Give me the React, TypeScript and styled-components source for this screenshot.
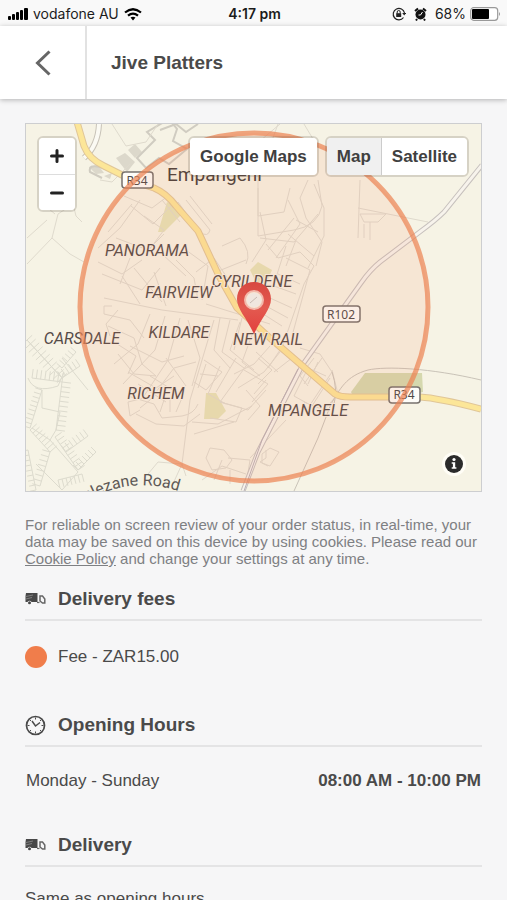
import React from "react";
import styled, { createGlobalStyle } from "styled-components";

const GlobalStyle = createGlobalStyle`
  * { box-sizing: border-box; }
  body {
    margin: 0;
    background: #f6f6f7;
    color: #4a4a4a;
    font-family: "Liberation Sans", Arial, sans-serif;
  }
  button { font: inherit; color: inherit; border: 0; padding: 0; cursor: pointer; }
`;

const Screen = styled.div`
  display: flex;
  flex-direction: column;
  height: 100vh;
  overflow: hidden;
`;

const StatusBar = styled.div`
  display: grid;
  grid-template-columns: 1fr auto 1fr;
  align-items: center;
  flex: none;
  height: 26px;
  padding: 2px 6px 0 8px;
  background: #f9f9f9;
  color: #1c1c1c;
  font: 14px/20px Inter, sans-serif;
`;

const StatusGroup = styled.div<{ $end?: boolean }>`
  display: flex;
  align-items: center;
  justify-content: ${(p) => (p.$end ? "flex-end" : "flex-start")};
  gap: ${(p) => (p.$end ? 8 : 5)}px;
`;

const Power = styled.span`
  display: flex;
  align-items: center;
  gap: 4px;
`;

const Clock = styled.span`
  font-weight: 600;
`;

const Header = styled.header`
  position: relative;
  display: flex;
  align-items: stretch;
  flex: none;
  height: 73px;
  background: #fff;
  box-shadow: 0 1px 5px rgba(0, 0, 0, 0.28);
`;

const BackButton = styled.button`
  display: flex;
  align-items: center;
  justify-content: center;
  width: 87px;
  background: none;
  border-right: 2px solid #e2e2e2;
`;

const Title = styled.h1`
  margin: 0;
  padding: 0 24px;
  align-self: center;
  font-size: 19px;
  line-height: 24px;
`;

const Content = styled.main`
  flex: 1;
  min-height: 0;
  padding: 24px 25px;
  overflow-y: auto;
  scrollbar-width: none;
`;

const MapPanel = styled.section`
  position: relative;
  height: 369px;
  border: 1px solid #cdced0;
  overflow: hidden;
  background: #f6f3e5;
`;

const MapDrawing = styled.svg`
  display: block;
  width: 100%;
  height: 100%;
`;

const MapControls = styled.div`
  position: absolute;
  inset: 12px 12px auto 11px;
  display: flex;
  align-items: flex-start;
  justify-content: space-between;
`;

const ControlGroup = styled.div<{ $vertical?: boolean }>`
  display: flex;
  flex-direction: ${(p) => (p.$vertical ? "column" : "row")};
  border: 2px solid rgba(90, 80, 70, 0.2);
  border-radius: 6px;
  background-clip: padding-box;
  overflow: hidden;
`;

const Layers = styled.div`
  display: flex;
  gap: 6px;
`;

const MapButton = styled.button<{ $active?: boolean; $divided?: boolean }>`
  height: 37px;
  padding: 0 10px;
  background: ${(p) => (p.$active ? "#f0f0f0" : "#fff")};
  border-left: ${(p) => (p.$divided ? "1px solid #ccc" : "0")};
  color: #404040;
  font-size: 17px;
  font-weight: bold;
  line-height: 20px;
`;

const ZoomButton = styled.button`
  display: flex;
  align-items: center;
  justify-content: center;
  width: 36px;
  height: 36px;
  background: #fff;

  & + & {
    border-top: 1px solid #ddd;
  }
`;

const InfoButton = styled.button`
  position: absolute;
  right: 15px;
  bottom: 15px;
  display: flex;
  align-items: center;
  justify-content: center;
  width: 24px;
  height: 24px;
  border-radius: 50%;
  background: #fffdf6;
`;

const Notice = styled.p`
  margin: 24px 0 12px;
  color: #7e8083;
  font-size: 15px;
  line-height: 17px;

  a { color: inherit; }
`;

const Section = styled.section`
  margin-bottom: 12px;
`;

const SectionHead = styled.div`
  display: flex;
  align-items: center;
  gap: 12px;
  height: 42px;
  border-bottom: 2px solid #e4e4e5;
`;

const SectionTitle = styled.h2`
  margin: 0;
  font-size: 19px;
  line-height: 24px;
`;

const FeeRow = styled.div`
  display: flex;
  align-items: center;
  gap: 11px;
  padding: 25px 0;
  font-size: 17px;
  line-height: 22px;
`;

const FeeDot = styled.span`
  width: 22px;
  height: 22px;
  border-radius: 50%;
  background: #f07d4b;
`;

const HoursRow = styled.div`
  display: flex;
  justify-content: space-between;
  padding: 24px 1px 22px;
  font-size: 17px;
  line-height: 20px;
`;

const SameHours = styled.p`
  margin: 0;
  padding: 22px 0;
  font-size: 17px;
  line-height: 20px;
`;

const TruckIcon = () => (
  <svg width="21" height="14" viewBox="0 0 21 14" aria-hidden="true">
    <path d="M1 1h11.500v9H6.500a2.200 2.200 0 0 0-4 0H.5V4z" fill="#484848" />
    <path d="M1 4.500l7-1.500M1 7l6-1.500" stroke="#999" strokeWidth=".7" />
    <circle cx="4.500" cy="10.800" r="1.500" fill="#484848" />
    <path d="M15 4h2.500l2.300 3v4h-2.300L15 9z" fill="none" stroke="#666" strokeWidth="1.500" />
    <path d="M12 10.500h2.500" stroke="#666" strokeWidth="1.200" />
  </svg>
);

const ClockIcon = () => (
  <svg width="21" height="21" viewBox="0 0 21 21" fill="none" stroke="#4a4a4a" aria-hidden="true">
    <circle cx="10.500" cy="10.500" r="9" strokeWidth="1.700" />
    <path d="M7 6l3.500 5L15 7.500" strokeWidth="1.500" />
    <path d="M10.500 2.500v2M10.500 16.500v2M2.500 10.500h2M16.500 10.500h2M5 16l1-1M16 16l-1-1M5 5l1 1M16 5l-1 1" strokeWidth="1" />
  </svg>
);

const InfoSection = ({ icon, title, children }: { icon: React.ReactNode; title: string; children: React.ReactNode }) => (
  <Section>
    <SectionHead>
      {icon}
      <SectionTitle>{title}</SectionTitle>
    </SectionHead>
    {children}
  </Section>
);

/* A street with short side lanes at regular steps. */
const comb = (x1: number, y1: number, x2: number, y2: number, n: number, len: number) => {
  const dx = x2 - x1;
  const dy = y2 - y1;
  const l = Math.hypot(dx, dy);
  let d = `M${x1} ${y1}L${x2} ${y2}`;
  for (let i = 0; i <= n; i++) {
    const x = x1 + (dx * i) / n;
    const y = y1 + (dy * i) / n;
    d += `M${x} ${y}l${(-dy / l) * len} ${(dx / l) * len}`;
  }
  return d;
};

const villageLanes = [
  comb(27, 340, 62, 378, 10, 7),
  comb(62, 378, 27, 340, 10, 7),
  comb(32, 378, 62, 382, 7, -9),
  comb(62, 382, 56, 430, 10, -9),
  comb(42, 390, 30, 428, 9, 7),
  comb(62, 378, 80, 366, 5, -8),
  comb(62, 368, 76, 352, 5, -7),
  comb(30, 430, 50, 452, 7, -9),
  comb(50, 452, 40, 486, 7, 8),
  comb(55, 437, 78, 470, 9, -8),
  comb(78, 470, 96, 452, 6, -7),
  comb(66, 452, 88, 436, 6, -8),
  comb(58, 480, 82, 474, 6, 8),
  comb(28, 450, 36, 490, 8, 6),
  "M62 358L88 390M28 378Q34 394 58 386L64 372M42 390V408L60 412L56 430L50 440L78 472L62 490M32 428L50 440M36 464L62 490",
].join("");

const townStreets = `
M27 264L52 238L58 214L73 204L76 216L82 222M27 238l20-18M55 214l-12-10M52 238l18 16l14 8
M112 124l14 22l20-4l12-18M130 164l-18 18l-12-2M140 200l-20 28l-22 20M124 196l28 12l16-12M131 206l22 18l20-20
M108 232l24-28M116 238l32 12l16-16M144 216l20 14l-18 24M162 200l18 22M178 202l22 30q8 6 10-2l-24-30M190 196l22 28
M98 262l24 12l20-14M102 274l40 16l18-22M120 284l10-26M104 298l58 12l76 10M118 310l-12 14l4 12M112 306h-8v8l26 6l14 18
M150 314l-12 30l-24 20M165 316l-10 34l-32 34M180 318l-12 42l-24 36M188 320l12 38l-8 28M108 326l26 12l8 26l14 12
M114 342l22 14l-8 18M118 354l16 20l22 2M130 346l32 16l22-6M196 362l-22 6l-24 32l-10 8M128 372l28 16l18-12
M176 260l18 18l4 22M186 250l22 16l-6 34M196 272l18-14l16 24M162 254l24 22M154 272l12 34M134 268l28 34M122 276l18 28
M216 272l30-12M222 246l18-8q12 14 6 26M206 304l64 20M214 320l-24 80l-8 64l-10 22M220 318l-6 32l16 18M230 320l-8 32l22 16
M240 322l-10 28l24 20M204 360l18 12l-16 18l-12-8M206 364l-8 24M220 366l-12 28l18 10M236 358l-20 34M246 366l-26 36l28 8l18-20
M220 402l22 6l-6 14l-26-4M194 434l40-12M192 422l26 2l34-18M128 396l26 8l8 14l20-2q12-2 16-12M136 414l20 10l28 2l16-12
M140 410l-10 6l-2-14l16-4M160 412l4-12M170 412v-14M176 412l6-14M200 374l18 2M138 384l28 18M150 376l26 16M166 358l20 28
M258 178v38l26-4l6-24M258 188v48l36-6q24-4 28-24l-4-26M260 238l34 4l24-28M268 250l26-32M276 258l24-34l-12-24
M308 180l-8 18l6 20l16 24l-6 24M314 184l10 24v28l-16 32M296 220l22 12M288 234l26 22M258 178l-4-32l26-22M278 124l-8 22
M304 124l12 20M360 180l-2 58M358 208l70 14M360 214h26l-8 8h-14zM364 224v14M370 222v18M286 258l24 12l-18 66M278 274l22 10
M274 286l22 8M270 298l22 10M266 306l22 12M260 312l22 14M266 244l12 14l22-6l14 14l-10 18l-22 64M286 246l-12 38M296 240l-10 26
M252 262l14-22l-6-28M242 318l-8 32M256 324l-14 38l18 14M270 346l-16 18l-20 10M280 352l-16 20l-26 16M244 370l24 14l-16 18
M256 352l22 20M266 332l14 18l-12 18M284 348l8 10l-18 14M258 384l14-14l-14-12M246 390l14 16l-12 14M266 380l-12 14
M300 348l20 6l12 18l-24 36M314 358l-14 18l8 10M322 358l-18 26M326 376l-18-8l-14 28l18 10l18-28M332 370l6 24l-14 16l-20-8M318 362l-10 22
M286 420l-36 38M206 458l4-10l14 2l8 10l-6 8l-14 2zM228 458l22 2l-4 26M222 460l-8 20M148 474l10-12l24 2l4 12M202 480l20-14l24 8M230 470v14
M262 454l8-6l9 4l-9 14l-8-3zM266 450v8l-6 4l8 4`;

const TerritoryMap = () => (
  <MapDrawing viewBox="26 124 455 367" preserveAspectRatio="xMidYMid slice" role="img" aria-label="Delivery area around Empangeni">
    <rect x="-400" y="-400" width="1600" height="1600" fill="#f6f3e5" />
    <path d="M167 202L178 208L182 214L164 232H158z M250 270l8-8l14 8l-6 14l-10-2z M206 393h10l10 18l-8 8h-14z" fill="#e6e3b8" />
    <path d="M351 392L365 373H422L423 392L408 396L352 394z" fill="#d5d8ae" />
    <path d="M116 158l9-5l10 9l-8 10zM128 150l7-6l7 8l-7 6zM89 167l9-2l6 8l-8 1zM104 176l8-3l-2 6z" fill="#dcd8cb" />
    <path d="M137 158l18-18l-8-8l22-13l8 10l-4 12l14 8l-18 15l-10-6l-13 10z M160 130l16-6l10 8l12-8M102 178l-12-6q-2-8 10-5l14 5" fill="none" stroke="#d0ccc1" strokeWidth="2" />
    <path d={townStreets} fill="none" stroke="#dfdacd" strokeWidth="1" />
    <path d={villageLanes} fill="none" stroke="#dddbce" strokeWidth="1" />
    <path d="M481 380C430 368 386 366 368 370C346 376 340 389 331 404L318 438L294 491M332 372q6 18 2 32" fill="none" stroke="#c9c3b8" strokeWidth="1" />
    <path d="M84 158Q98 146 99 124" fill="none" stroke="#c8c3b8" strokeWidth="6" />
    <path d="M84 158Q98 146 99 124" fill="none" stroke="#fbfaf3" strokeWidth="4" />
    <path d="M482 165L444 212Q436 220 421 231L380 262Q370 270 361 283L303 364L258 452L243 491" fill="none" stroke="#c6c0bd" strokeWidth="5" />
    <path d="M482 165L444 212Q436 220 421 231L380 262Q370 270 361 283L303 364L258 452L243 491" fill="none" stroke="#f7f3ec" strokeWidth="3" />
    <path d="M298 369L262 440L244 491" fill="none" stroke="#b9b0b6" strokeWidth="1" />
    <g fill="none" strokeLinejoin="round">
      <path d="M77 122L84 146Q89 159 104 166L138 183L154 188Q166 193 176 206L198 231L219 276L237 308L270 338L335 394Q340 397 350 397H420Q438 398 481 409" stroke="#e0c698" strokeWidth="7" />
      <path d="M77 122L84 146Q89 159 104 166L138 183L154 188Q166 193 176 206L198 231L219 276L237 308L270 338L335 394Q340 397 350 397H420Q438 398 481 409" stroke="#fce698" strokeWidth="5" />
    </g>
    <g fill="#fdfcf8" stroke="#77716d" strokeWidth="1.500">
      <rect x="122" y="172" width="31" height="16" rx="3" />
      <rect x="323" y="306" width="37" height="16" rx="3" />
      <rect x="389" y="387" width="31" height="16" rx="3" />
    </g>
    <g fontFamily="Noto Sans, sans-serif" fontSize="12" fill="#4d4848" textAnchor="middle">
      <text x="137" y="185">R34</text>
      <text x="341" y="319">R102</text>
      <text x="404" y="399">R34</text>
    </g>
    <text x="167" y="181" fontFamily="Roboto, sans-serif" fontSize="19" fill="#453e3b">Empangeni</text>
    <g fontFamily="Roboto, sans-serif" fontStyle="italic" fontSize="16" fill="#544b48" textAnchor="middle" stroke="#f8f1e4" strokeWidth="2" paintOrder="stroke">
      <text x="147" y="256">PANORAMA</text>
      <text x="252" y="287">CYRILDENE</text>
      <text x="179" y="298">FAIRVIEW</text>
      <text x="179" y="338">KILDARE</text>
      <text x="82" y="344">CARSDALE</text>
      <text x="268" y="345">NEW RAIL</text>
      <text x="156" y="399">RICHEM</text>
      <text x="308" y="416">MPANGELE</text>
    </g>
    <path id="road-label" d="M58 522Q124 462 200 500" fill="none" />
    <text fontFamily="Roboto, sans-serif" fontSize="16" fill="#5d5855">
      <textPath href="#road-label" startOffset="3">Ngwelezane Road</textPath>
    </text>
    <circle cx="254" cy="307" r="174" fill="#f5804f" fillOpacity=".11" stroke="#ed8251" strokeOpacity=".7" strokeWidth="5" />
    <defs>
      <linearGradient id="pin" x1="0" y1="0" x2="0" y2="1">
        <stop offset="0" stopColor="#d84840" />
        <stop offset=".5" stopColor="#e35a50" />
        <stop offset="1" stopColor="#e2403d" />
      </linearGradient>
    </defs>
    <path fillRule="evenodd" d="M254 282C244 282 237 289 237 299C237 309 246 317 254 334C262 317 271 309 271 299C271 289 264 282 254 282ZM254 291A9 9 0 1 1 254 309A9 9 0 1 1 254 291Z" fill="url(#pin)" />
    <circle cx="254" cy="300" r="9" fill="none" stroke="#f3b8ab" strokeWidth="2" />
    <circle cx="254" cy="300" r="7" fill="#f0e6df" />
    <path d="M250 303l7-6" stroke="#c7b9b2" strokeWidth="1" />
  </MapDrawing>
);

export default function App() {
  return (
    <Screen>
      <GlobalStyle />
      <StatusBar>
        <StatusGroup>
          <svg width="20" height="12" viewBox="0 0 20 12" fill="#000" aria-label="Signal">
            <rect x="0" y="8" width="3" height="4" rx="1" />
            <rect x="4" y="6" width="3" height="6" rx="1" />
            <rect x="8" y="4" width="3" height="8" rx="1" />
            <rect x="12" y="2" width="3" height="10" rx="1" />
            <rect x="16" y="0" width="4" height="12" rx="1" />
          </svg>
          <span>vodafone AU</span>
          <svg width="18" height="13" viewBox="0 0 18 13" fill="none" stroke="#000" strokeWidth="2.200" aria-label="Wi-Fi">
            <path d="M1 4.500Q9-2 17 4.500" />
            <path d="M4 7.700Q9 3.500 14 7.700" />
            <path d="M6.500 9.500Q9 7.800 11.500 9.500L9 12.500z" fill="#000" stroke="none" />
          </svg>
        </StatusGroup>
        <Clock>4:17 pm</Clock>
        <StatusGroup $end>
          <svg width="14" height="14" viewBox="0 0 14 14" fill="none" stroke="#222" aria-label="Rotation lock">
            <path d="M11.500 10.500A5.700 5.700 0 1 1 12.500 6" strokeWidth="1.200" />
            <path d="M10.200 6h4l-2 2.600z" fill="#222" stroke="none" />
            <rect x="4.200" y="6.200" width="5" height="3.800" fill="#222" stroke="none" />
            <path d="M5.200 6.500V5a1.500 1.500 0 0 1 3 0v1.500" />
          </svg>
          <svg width="13" height="14" viewBox="0 0 13 14" aria-label="Alarm">
            <circle cx="6.500" cy="7.500" r="5" fill="#111" />
            <path d="M1 4l3-2.500M12 4L9 1.500M3 12l-1 1.500M10 12l1 1.500" stroke="#111" strokeWidth="2" />
            <path d="M8.500 5L6.500 8H4.500" fill="none" stroke="#fff" strokeWidth="1" />
          </svg>
          <Power>
            <span>68%</span>
            <svg width="31" height="14" viewBox="0 0 31 14" aria-label="Battery">
              <rect x=".7" y=".7" width="27" height="12.600" rx="3" fill="#fff" stroke="#999" strokeWidth="1.200" />
              <rect x="2" y="2" width="17" height="10" rx="1" fill="#000" />
              <path d="M29 5q2 2 0 4z" fill="#999" />
            </svg>
          </Power>
        </StatusGroup>
      </StatusBar>
      <Header>
        <BackButton type="button" aria-label="Back">
          <svg width="16" height="26" viewBox="0 0 16 26" fill="none" stroke="#666" strokeWidth="3">
            <path d="M14.500 1.500L2.500 13L14.500 24.500" />
          </svg>
        </BackButton>
        <Title>Jive Platters</Title>
      </Header>
      <Content>
        <MapPanel>
          <TerritoryMap />
          <MapControls>
            <ControlGroup $vertical>
              <ZoomButton type="button" aria-label="Zoom in">
                <svg width="14" height="14" viewBox="0 0 14 14" stroke="#222" strokeWidth="3" strokeLinecap="round">
                  <path d="M7 1.500v11M1.500 7h11" />
                </svg>
              </ZoomButton>
              <ZoomButton type="button" aria-label="Zoom out">
                <svg width="14" height="14" viewBox="0 0 14 14" stroke="#222" strokeWidth="3" strokeLinecap="round">
                  <path d="M1.500 7h11" />
                </svg>
              </ZoomButton>
            </ControlGroup>
            <Layers>
              <ControlGroup>
                <MapButton type="button">Google Maps</MapButton>
              </ControlGroup>
              <ControlGroup>
                <MapButton type="button" $active aria-pressed="true">Map</MapButton>
                <MapButton type="button" $divided aria-pressed="false">Satellite</MapButton>
              </ControlGroup>
            </Layers>
          </MapControls>
          <InfoButton type="button" aria-label="Map information">
            <svg width="18" height="18" viewBox="0 0 18 18">
              <circle cx="9" cy="9" r="9" fill="#2b2b2b" />
              <circle cx="9" cy="4.500" r="1.600" fill="#fff" />
              <path d="M6.700 7.300h3.500v5h1.200v1.500H6.700v-1.500h1.200V8.800H6.700z" fill="#fff" />
            </svg>
          </InfoButton>
        </MapPanel>
        <Notice>
          For reliable on screen review of your order status, in real-time, your data may be saved on this device by using
          cookies. Please read our <a href="#cookies">Cookie Policy</a> and change your settings at any time.
        </Notice>
        <InfoSection icon={<TruckIcon />} title="Delivery fees">
          <FeeRow>
            <FeeDot />
            <span>Fee - ZAR15.00</span>
          </FeeRow>
        </InfoSection>
        <InfoSection icon={<ClockIcon />} title="Opening Hours">
          <HoursRow>
            <span>Monday - Sunday</span>
            <strong>08:00 AM - 10:00 PM</strong>
          </HoursRow>
        </InfoSection>
        <InfoSection icon={<TruckIcon />} title="Delivery">
          <SameHours>Same as opening hours.</SameHours>
        </InfoSection>
      </Content>
    </Screen>
  );
}
